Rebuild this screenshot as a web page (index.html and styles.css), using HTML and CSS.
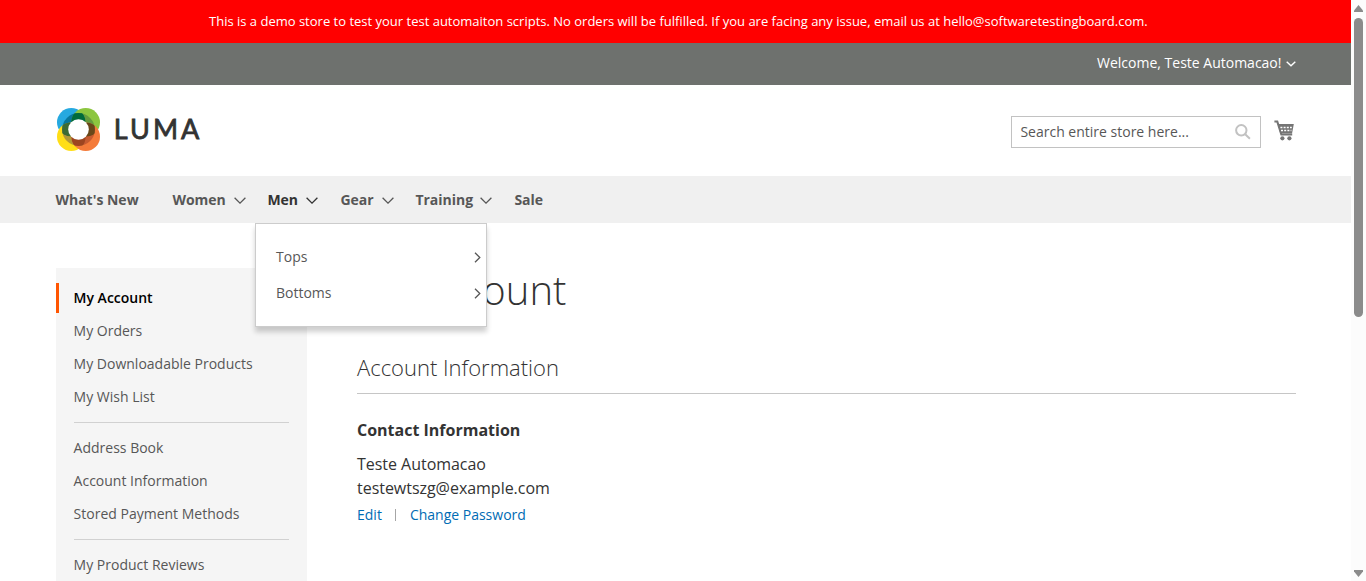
FILE: index.html
```html
<!DOCTYPE html>
<html lang="en">
<head>
<meta charset="utf-8">
<title>My Account</title>
<link rel="stylesheet" href="styles.css">
</head>
<body>
<div class="viewport">
  <div class="page">
    <div class="demo-notice">This is a demo store to test your test automaiton scripts. No orders will be fulfilled. If you are facing any issue, email us at hello@softwaretestingboard.com.</div>
    <div class="panel">
      <span class="welcome">Welcome, Teste Automacao!</span>
      <svg class="chev-small" viewBox="0 0 10 6"><path d="M.7.8 5 4.8 9.3.8"/></svg>
    </div>
    <header class="header">
      <svg class="logo" width="148" height="46" viewBox="0 0 148 46">
        <defs>
          <clipPath id="blue"><circle cx="15.3" cy="15.3" r="14.3"/></clipPath>
          <clipPath id="green"><circle cx="29.7" cy="15.3" r="14.3"/></clipPath>
          <clipPath id="yellow"><circle cx="15.3" cy="29.7" r="14.3"/></clipPath>
          <clipPath id="orange"><circle cx="29.7" cy="29.7" r="14.3"/></clipPath>
          <clipPath id="ring"><circle cx="22.5" cy="22.5" r="16.4"/></clipPath>
        </defs>
        <circle cx="15.3" cy="15.3" r="14.3" fill="#26a9e0"/>
        <circle cx="29.7" cy="15.3" r="14.3" fill="#8cc63f"/>
        <circle cx="15.3" cy="29.7" r="14.3" fill="#ffde17"/>
        <circle cx="29.7" cy="29.7" r="14.3" fill="#f47b3a"/>
        <circle cx="22.5" cy="22.5" r="16.4" fill="#07779c" clip-path="url(#blue)"/>
        <circle cx="22.5" cy="22.5" r="16.4" fill="#659b3e" clip-path="url(#green)"/>
        <circle cx="22.5" cy="22.5" r="16.4" fill="#b1983a" clip-path="url(#yellow)"/>
        <circle cx="22.5" cy="22.5" r="16.4" fill="#c65b30" clip-path="url(#orange)"/>
        <g clip-path="url(#ring)">
          <g clip-path="url(#blue)"><path d="M22.5 2.9a14.3 14.3 0 0 0-7.1 12.4h14.2a14.3 14.3 0 0 0-7.1-12.4z" fill="#006b3b"/><path d="M2.9 22.5a14.3 14.3 0 0 1 12.4-7.1v14.2a14.3 14.3 0 0 1-12.4-7.1z" fill="#3c6b35"/></g>
          <g clip-path="url(#orange)"><path d="M42.1 22.5a14.3 14.3 0 0 0-12.4-7.1v14.2a14.3 14.3 0 0 0 12.4-7.1z" fill="#684719"/><path d="M22.5 42.1a14.3 14.3 0 0 1-7.1-12.4h14.2a14.3 14.3 0 0 1-7.1 12.4z" fill="#9d4520"/></g>
        </g>
        <circle cx="22.5" cy="22.5" r="10.3" fill="#fff"/>
        <text class="wordmark" x="57.8" y="32" textLength="85.5">LUMA</text>
      </svg>
      <div class="header-tools">
        <div class="search">
          <span>Search entire store here...</span>
          <svg width="16" height="16" viewBox="0 0 16 16"><circle cx="6.3" cy="6.3" r="5.2"/><path d="m10.2 10.2 4.7 4.5"/></svg>
        </div>
        <svg class="cart" width="20" height="21" viewBox="0 0 20 21">
          <path class="cart-frame" d="M.4 1.6h2.9l4 12.8h10.9"/>
          <path class="cart-basket" d="M3.8 4h16l-1.8 9.4H6.3z"/>
          <path class="cart-grid" d="M6.4 7.4h11.4M7 10.5h10.4"/>
          <circle cx="8.4" cy="18.3" r="2.1"/><circle cx="15.4" cy="18.3" r="2.1"/>
        </svg>
      </div>
    </header>
    <nav class="nav">
      <a class="nav-new">What's New</a>
      <a class="nav-women">Women<svg class="chev" viewBox="0 0 12 7"><path d="m.6.7 5.4 5.4L11.4.7"/></svg></a>
      <div class="nav-men">
        <a class="active">Men<svg class="chev" viewBox="0 0 12 7"><path d="m.6.7 5.4 5.4L11.4.7"/></svg></a>
        <div class="submenu">
          <a>Tops<svg viewBox="0 0 7 11"><path d="m1 .8 4.8 4.7L1 10.2"/></svg></a>
          <a>Bottoms<svg viewBox="0 0 7 11"><path d="m1 .8 4.8 4.7L1 10.2"/></svg></a>
        </div>
      </div>
      <a class="nav-gear">Gear<svg class="chev" viewBox="0 0 12 7"><path d="m.6.7 5.4 5.4L11.4.7"/></svg></a>
      <a class="nav-training">Training<svg class="chev" viewBox="0 0 12 7"><path d="m.6.7 5.4 5.4L11.4.7"/></svg></a>
      <a>Sale</a>
    </nav>
    <main class="main">
      <aside class="sidebar">
        <a class="current">My Account</a>
        <a>My Orders</a>
        <a>My Downloadable Products</a>
        <a>My Wish List</a>
        <hr>
        <a>Address Book</a>
        <a>Account Information</a>
        <a>Stored Payment Methods</a>
        <hr>
        <a>My Product Reviews</a>
      </aside>
      <section class="content">
        <h1>My Account</h1>
        <h2>Account Information</h2>
        <h3>Contact Information</h3>
        <p>Teste Automacao<br>testewtszg@example.com</p>
        <div class="actions"><a>Edit</a><a>Change Password</a></div>
      </section>
    </main>
  </div>
  <div class="scrollbar">
    <svg width="9" height="7" viewBox="0 0 9 7"><path d="M4.5 0 9 5.5V7H0V5.5z"/></svg>
    <div class="thumb"></div>
    <svg class="down" width="9" height="7" viewBox="0 0 9 7"><path d="M4.5 7 9 1.5V0H0v1.5z"/></svg>
  </div>
</div>
</body>
</html>
```
FILE: styles.css
```css
* { box-sizing: border-box; }
body { margin: 0; overflow: hidden; background: #fff; color: #333; font: 14px/20px "Open Sans", "Noto Sans", sans-serif; }
svg { display: block; flex: none; }
.viewport { display: flex; width: 1366px; height: 581px; overflow: hidden; white-space: nowrap; }
.page { width: 1351px; height: 581px; overflow: hidden; }

.demo-notice { height: 43px; padding-left: 209px; background: #f00; color: #fff; font-size: 13px; line-height: 43px; }
.panel { display: flex; justify-content: flex-end; align-items: center; gap: 4.5px; height: 42px; padding: 0 55px 2px 0; background: #6e716e; color: #fff; }
.chev-small { width: 10px; height: 6px; margin-top: 2px; fill: none; stroke: #fff; stroke-width: 1.4; }

.header { display: flex; justify-content: space-between; height: 91px; padding: 22px 56px 0 56px; }
.wordmark { font: 400 27px Lato, sans-serif; fill: #333; stroke: #333; stroke-width: .8px; }
.header-tools { display: flex; gap: 14px; padding-top: 9px; }
.search { display: flex; justify-content: space-between; align-items: center; width: 250px; height: 32px; padding: 0 9px 0 8.4px; border: 1px solid #c2c2c2; color: #575757; }
.search svg { fill: none; stroke: #c2c2c2; stroke-width: 2; }
.cart { margin: 4px 1px 0 -1px; fill: #757575; }
.cart-frame { fill: none; stroke: #757575; stroke-width: 2; }
.cart-grid { fill: none; stroke: #fff; stroke-width: 1.5; stroke-dasharray: 2 1.2; }

.nav { display: flex; height: 47px; padding-left: 55.4px; background: #f0f0f0; color: #575757; font-weight: 700; line-height: 47px; }
.nav a { display: flex; align-items: center; }
.chev { width: 12px; height: 7px; margin: 2px 0 0 8px; fill: none; stroke: currentColor; stroke-width: 1.3; }
.nav-new { width: 117px; }
.nav-women { width: 95px; }
.nav-men { position: relative; width: 73px; }
.nav-men .active { color: #333; }
.nav-gear { width: 75px; }
.nav-training { width: 99px; }
.nav-training .chev { margin-left: 7px; }
.submenu { position: absolute; z-index: 2; top: 47px; left: -12.4px; width: 232px; height: 104px; padding: 15px 5.5px 15px 20px; border: 1px solid #ccc; background: #fff; box-shadow: 0 5px 5px rgba(0, 0, 0, .19); font-weight: 400; line-height: 36px; }
.submenu a { justify-content: space-between; }
.submenu svg { width: 7px; height: 11px; margin-top: 1px; fill: none; stroke: currentColor; stroke-width: 1.3; }

.main { display: flex; gap: 50px; padding: 45px 55px 0 56px; }
.sidebar { width: 251px; height: 340px; padding: 15px 18px 0 0; background: #f5f5f5; color: #575757; }
.sidebar a { display: block; height: 30px; margin-bottom: 3px; padding-left: 17.6px; line-height: 30px; }
.sidebar .current { padding-left: 14.6px; border-left: 3px solid #ff5501; color: #000; font-weight: 600; }
.sidebar hr { height: 1px; margin: 10px 0 10px 18px; border: 0; background: #d1d1d1; }
.content { flex: 1; }
h1, h2, h3, p { margin: 0; }
h1 { height: 82px; font-size: 40px; font-weight: 300; line-height: 44px; }
h2 { height: 44px; border-bottom: 1px solid #c6c6c6; font-size: 22px; font-weight: 300; line-height: 34px; }
h3 { margin-top: 24px; font-size: 16px; font-weight: 700; line-height: 24px; }
p { margin-top: 10px; font-size: 16px; line-height: 24px; letter-spacing: -.03px; }
.actions { display: flex; margin-top: 5px; color: #006bb4; }
.actions a:first-child { position: relative; padding-right: 28px; }
.actions a:first-child::after { content: ""; position: absolute; top: 4px; right: 14px; width: 1px; height: 12px; background: #a6a6a6; }

.scrollbar { display: flex; flex-direction: column; align-items: center; width: 15px; height: 581px; padding: 5px 0 4px; background: #fcfcfc; fill: #8b8b8b; }
.thumb { width: 9px; height: 299px; margin-top: 6px; border-radius: 5px; background: #8b8b8b; }
.down { margin-top: auto; }
```
